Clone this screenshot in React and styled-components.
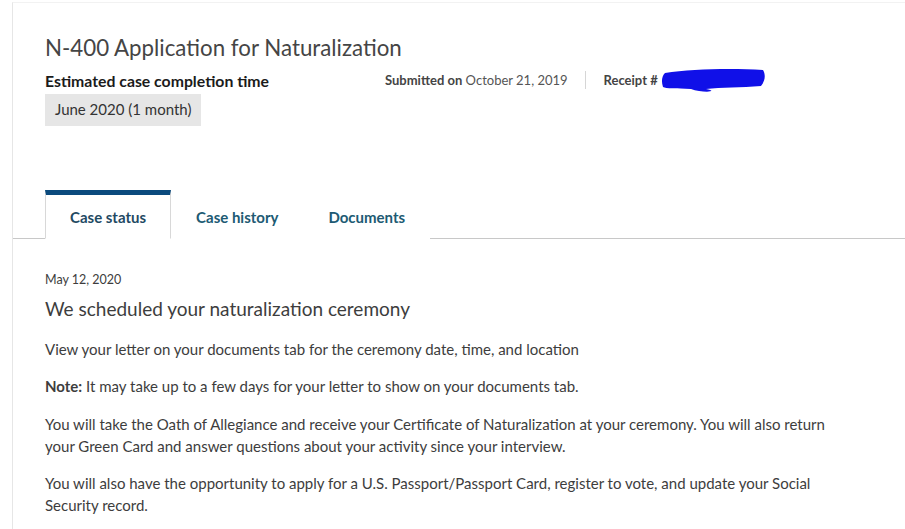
import React from "react";
import styled, { createGlobalStyle } from "styled-components";

const Global = createGlobalStyle`
  html, body { margin: 0; padding: 0; background: #fff; }
  body { font-family: "Lato", "Noto Sans", sans-serif; color: #3d3d3d; }
  * { box-sizing: border-box; }
`;

const Page = styled.div`
  width: 905px;
  height: 529px;
  overflow: hidden;
  padding: 2px 0 0 12px;
`;

const Card = styled.div`
  border-left: 1px solid #e6e6e6;
  border-top: 1px solid #f2f2f2;
  height: 100%;
`;

const Header = styled.div`
  padding: 31px 0 0 32px;
`;

const Title = styled.h1`
  margin: 0;
  font-size: 22.3px;
  font-weight: 400;
  line-height: 28px;
  color: #454545;
`;

const MetaRow = styled.div`
  display: flex;
  align-items: flex-start;
  margin-top: 5px;
`;

const Estimate = styled.div`
  width: 340px;
`;

const EstimateLabel = styled.div`
  font-size: 15.8px;
  font-weight: 700;
  line-height: 20px;
  color: #1b1b1b;
  padding-top: 4px;
`;

const Badge = styled.div`
  display: inline-block;
  margin-top: 3px;
  padding: 6px 10px 7px;
  background: #e6e6e6;
  font-size: 15px;
  line-height: 19px;
  color: #333;
`;

const Meta = styled.div`
  display: flex;
  align-items: center;
  font-size: 13px;
  line-height: 18px;
  color: #555;
`;

const Strong = styled.b`
  font-weight: 700;
  color: #444;
`;

const Sep = styled.span`
  width: 1px;
  height: 18px;
  background: #d6d6d6;
  margin: 0 18px 0 17px;
`;

const Scribble = styled.svg`
  display: block;
  margin-left: 3px;
`;

const Tabs = styled.div`
  display: flex;
  margin-top: 64px;
  padding-left: 32px;
  border-bottom: 1px solid #c8c8c8;
`;

const Tab = styled.div`
  height: 49px;
  padding: 13px 24px 0;
  font-size: 15px;
  font-weight: 700;
  color: ${p => (p.$active ? "#1f4a63" : "#205a73")};
  margin-bottom: -1px;
  background: #fff;
  border: 1px solid ${p => (p.$active ? "#d8d8d8" : "transparent")};
  border-top: 5px solid ${p => (p.$active ? "#0b4a7d" : "transparent")};
  border-bottom: 1px solid ${p => (p.$active ? "#fff" : "transparent")};
`;

const Body = styled.div`
  padding: 32px 0 0 32px;
  max-width: 830px;
`;

const DateLine = styled.div`
  font-size: 12.5px;
  line-height: 18px;
  color: #3d3d3d;
`;

const Heading = styled.h2`
  margin: 7px 0 0;
  font-size: 19px;
  font-weight: 400;
  line-height: 26px;
  color: #3d3d3d;
`;

const P = styled.p`
  margin: 15.5px 0 0;
  font-size: 15px;
  line-height: 22px;
  color: #3d3d3d;
`;

export default function App() {
  return (
    <Page>
      <Global />
      <Card>
        <Header>
          <Title>N-400 Application for Naturalization</Title>
          <MetaRow>
            <Estimate>
              <EstimateLabel>Estimated case completion time</EstimateLabel>
              <Badge>June 2020 (1 month)</Badge>
            </Estimate>
            <Meta>
              <span><Strong>Submitted on</Strong> October 21, 2019</span>
              <Sep />
              <Strong>Receipt #</Strong>
              <Scribble width="106" height="26" viewBox="0 0 106 26">
                <path d="M4 6 C30 2 70 1 102 3 C105 8 104 14 100 19 C80 21 60 20 45 22 C60 25 40 26 30 22 C15 21 5 22 2 20 C0 14 1 9 4 6 Z" fill="#1010e8" />
              </Scribble>
            </Meta>
          </MetaRow>
        </Header>
        <Tabs>
          <Tab $active>Case status</Tab>
          <Tab>Case history</Tab>
          <Tab>Documents</Tab>
        </Tabs>
        <Body>
          <DateLine>May 12, 2020</DateLine>
          <Heading>We scheduled your naturalization ceremony</Heading>
          <P>View your letter on your documents tab for the ceremony date, time, and location</P>
          <P><b>Note:</b> It may take up to a few days for your letter to show on your documents tab.</P>
          <P>You will take the Oath of Allegiance and receive your Certificate of Naturalization at your ceremony. You will also return your Green Card and answer questions about your activity since your interview.</P>
          <P>You will also have the opportunity to apply for a U.S. Passport/Passport Card, register to vote, and update your Social Security record.</P>
        </Body>
      </Card>
    </Page>
  );
}
